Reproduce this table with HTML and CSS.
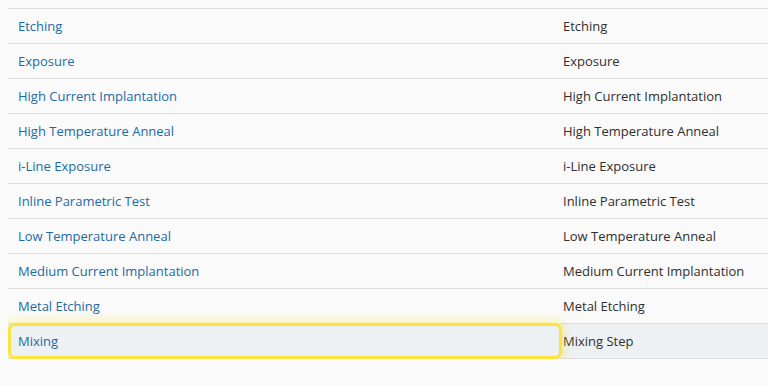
FILE: index.html
```html
<!DOCTYPE html>
<html lang="en">
<head>
    <meta charset="UTF-8">
    <title>Process Steps</title>
    <link rel="stylesheet" href="styles.css">
</head>
<body>
    <table class="steps">
        <tr><td class="name"><a href="#">Etching</a></td><td class="desc">Etching</td></tr>
        <tr><td class="name"><a href="#">Exposure</a></td><td class="desc">Exposure</td></tr>
        <tr><td class="name"><a href="#">High Current Implantation</a></td><td class="desc">High Current Implantation</td></tr>
        <tr><td class="name"><a href="#">High Temperature Anneal</a></td><td class="desc">High Temperature Anneal</td></tr>
        <tr><td class="name"><a href="#">i-Line Exposure</a></td><td class="desc">i-Line Exposure</td></tr>
        <tr><td class="name"><a href="#">Inline Parametric Test</a></td><td class="desc">Inline Parametric Test</td></tr>
        <tr><td class="name"><a href="#">Low Temperature Anneal</a></td><td class="desc">Low Temperature Anneal</td></tr>
        <tr><td class="name"><a href="#">Medium Current Implantation</a></td><td class="desc">Medium Current Implantation</td></tr>
        <tr><td class="name"><a href="#">Metal Etching</a></td><td class="desc">Metal Etching</td></tr>
        <tr class="selected"><td class="name focused"><a href="#">Mixing</a></td><td class="desc">Mixing Step</td></tr>
    </table>
</body>
</html>
```

FILE: styles.css
```css
body {
    margin: 8px 0 0 8px;
    background-color: #fafafa;
    font-family: "Open Sans", sans-serif;
    font-size: 13px;
}

table.steps {
    width: 760px;
    border-collapse: collapse;
    border-top: 1px solid #dedede;
}

table.steps td {
    height: 34px;
    padding: 0;
    border-bottom: 1px solid #dedede;
    vertical-align: middle;
}

td.name {
    width: 553px;
    padding-left: 10px !important;
    box-sizing: border-box;
}

td.name a {
    color: #1b6aa5;
    text-decoration: none;
}

td.desc {
    padding-left: 2px !important;
    color: #2f2f2f;
}

tr.selected {
    background-color: #edf1f4;
}

/* focus ring drawn over the cell */
td.focused {
    position: relative;
}

td.focused::after {
    content: "";
    position: absolute;
    top: -1px;
    bottom: -1px;
    left: 0;
    right: -1px;
    border: 3px solid #fde43c;
    border-radius: 7px;
    box-shadow: 0 0 10px 3px rgba(253, 228, 60, 0.4);
    pointer-events: none;
}
```
